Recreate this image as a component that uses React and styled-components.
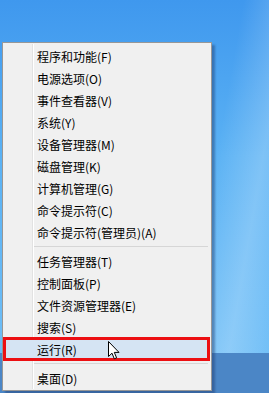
import React from "react";
import styled, { createGlobalStyle } from "styled-components";

const groups = [
  [
    "程序和功能(F)",
    "电源选项(O)",
    "事件查看器(V)",
    "系统(Y)",
    "设备管理器(M)",
    "磁盘管理(K)",
    "计算机管理(G)",
    "命令提示符(C)",
    "命令提示符(管理员)(A)",
  ],
  ["任务管理器(T)", "控制面板(P)", "文件资源管理器(E)", "搜索(S)", "运行(R)"],
  ["桌面(D)"],
];

const GlobalStyle = createGlobalStyle`
  html, body {
    margin: 0;
    padding: 0;
    overflow: hidden;
  }
`;

const Desktop = styled.div`
  width: 269px;
  height: 393px;
  box-sizing: border-box;
  padding: 42px 0 0 2px;
  background:
    linear-gradient(180deg, transparent 0, transparent 353px, #4b86c6 353px),
    linear-gradient(100deg, transparent 72%, rgba(255, 255, 255, 0.22) 86%, transparent 100%),
    linear-gradient(180deg, #3f98ee 0%, #5bb2f4 40%, #72c0f7 100%);
  font-family: "Noto Sans CJK SC", "Noto Sans", sans-serif;
`;

const Menu = styled.div`
  position: relative;
  width: 210px;
  height: 349px;
  box-sizing: border-box;
  border: 1px solid #979797;
  background: #f0f0f0;
  padding: 2px 0 1px 1px;
  box-shadow: 3px 3px 2px rgba(30, 60, 110, 0.45);
  &:before {
    content: "";
    position: absolute;
    top: 1px;
    bottom: 1px;
    left: 29px;
    width: 1px;
    background: #e2e2e2;
    border-right: 1px solid #ffffff;
  }
`;

const Item = styled.div`
  position: relative;
  height: 22px;
  box-sizing: border-box;
  display: flex;
  align-items: center;
  padding-left: 33px;
  margin-right: 2px;
  font-size: 12px;
  color: #000;
  white-space: nowrap;
  background: ${(p) => (p.$active ? "#d5e4f3" : "transparent")};
  outline: ${(p) => (p.$active ? "3px solid #ec0f12" : "none")};
  outline-offset: -2px;
  z-index: 1;
`;

const Separator = styled.div`
  height: 7px;
  display: flex;
  align-items: center;
  padding-left: 30px;
  margin-right: 3px;
  &:after {
    content: "";
    flex: 1;
    height: 1px;
    background: #d6d6d6;
  }
`;

const Cursor = styled.svg`
  position: absolute;
  left: 105px;
  top: 298px;
  z-index: 2;
`;

export default function App() {
  return (
    <>
      <GlobalStyle />
      <Desktop>
        <Menu>
          {groups.map((g, gi) => (
            <React.Fragment key={gi}>
              {gi > 0 && <Separator />}
              {g.map((label) => (
                <Item key={label} $active={label === "运行(R)"}>
                  {label}
                </Item>
              ))}
            </React.Fragment>
          ))}
          <Cursor width="12" height="19" viewBox="0 0 12 19">
            <path
              d="M0.5 0.5 L0.5 15.5 L4 12.2 L6.3 17.8 L8.6 16.8 L6.3 11.4 L11 11.4 Z"
              fill="#fff"
              stroke="#000"
              strokeWidth="1"
              strokeLinejoin="miter"
            />
          </Cursor>
        </Menu>
      </Desktop>
    </>
  );
}
